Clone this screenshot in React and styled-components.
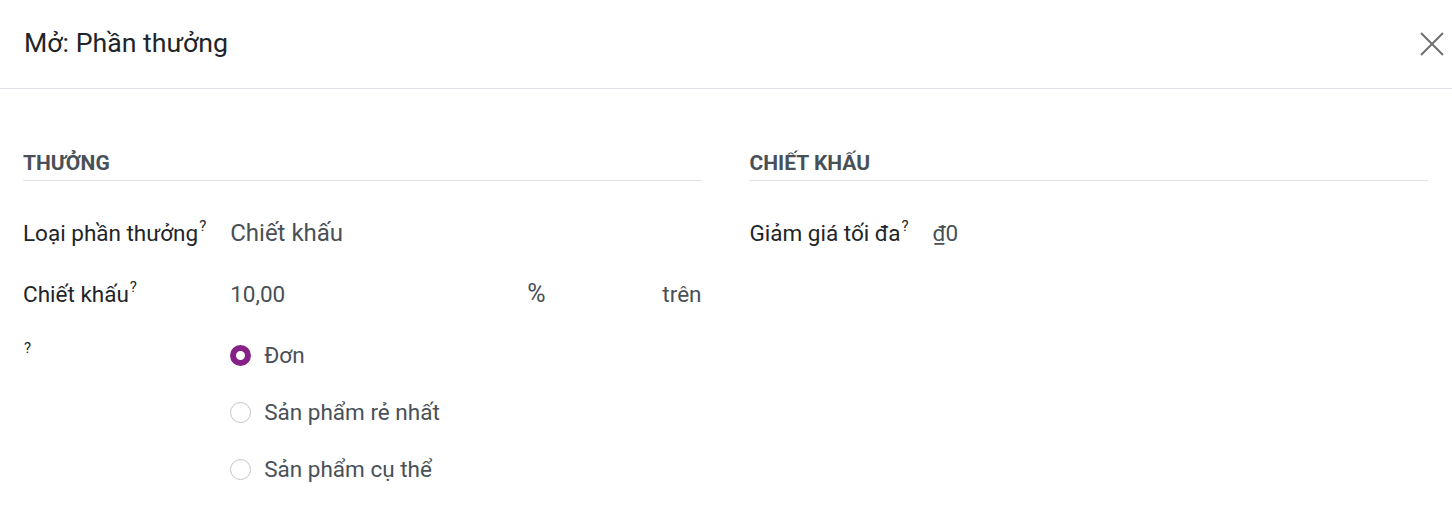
import React from "react";
import styled, { createGlobalStyle } from "styled-components";

const Global = createGlobalStyle`
  html, body { margin: 0; padding: 0; background: #fff; }
  body { font-family: Roboto, "Noto Sans", sans-serif; color: #212529; }
  * { box-sizing: border-box; }
`;

const Dialog = styled.div`
  width: 1452px;
  height: 528px;
  background: #fff;
  overflow: hidden;
`;

const Header = styled.header`
  height: 89px;
  display: flex;
  align-items: center;
  justify-content: space-between;
  padding: 0 0 0 24px;
  border-bottom: 1px solid #dee2e6;
`;

const Title = styled.h4`
  margin: 0;
  font-size: 26.7px;
  font-weight: 400;
  color: #212529;
  line-height: 32px;
  padding-bottom: 2px;
`;

const Close = styled.button`
  width: 40px;
  height: 40px;
  border: 0;
  background: none;
  padding: 0;
  display: flex;
  align-items: center;
  justify-content: center;
  cursor: pointer;
`;

const Body = styled.div`
  padding: 61px 24px 0 23px;
  display: grid;
  grid-template-columns: 1fr 1fr;
  column-gap: 48px;
`;

const Group = styled.section`
  display: flex;
  flex-direction: column;
`;

const SectionTitle = styled.div`
  font-size: 21px;
  font-weight: 700;
  text-transform: uppercase;
  color: #495057;
  line-height: 26px;
  padding-bottom: 4px;
  border-bottom: 1px solid #dee2e6;
`;

const Table = styled.div`
  display: grid;
  grid-template-columns: max-content 1fr;
  column-gap: 24px;
  margin-top: 37px;
  align-items: start;
`;

const Label = styled.div`
  font-size: 22.5px;
  color: #212529;
  line-height: 30px;
  min-height: ${p => p.$h ?? 61}px;
  white-space: nowrap;
`;

const Help = styled.sup`
  font-size: 15px;
  line-height: 0;
  vertical-align: baseline;
  margin-left: 1px;
  position: relative;
  top: -10px;
  color: #212529;
`;

const Value = styled.div`
  font-size: ${p => p.$size || 22.5}px;
  color: #495057;
  line-height: 30px;
  min-height: 61px;
`;

const Amount = styled.div`
  display: flex;
  align-items: baseline;
  font-size: 22.5px;
  color: #495057;
  line-height: 30px;
  min-height: 61px;
`;

const AmountInput = styled.span`
  flex: 0 0 297px;
`;

const Unit = styled.span`
  flex: 1;
  font-size: 25px;
`;

const Suffix = styled.span`
  color: #495057;
`;

const Radios = styled.div`
  display: flex;
  flex-direction: column;
  gap: 27px;
`;

const RadioRow = styled.label`
  display: flex;
  align-items: center;
  gap: 13px;
  font-size: 22.5px;
  color: #495057;
  line-height: 30px;
`;

const RadioDot = styled.span`
  width: 21px;
  height: 21px;
  border-radius: 50%;
  flex: 0 0 21px;
  background: #fff;
  border: ${p => (p.$on ? "6.5px solid #862187" : "1px solid #c4c4c4")};
`;

const Currency = styled.span`
  color: #495057;
`;

const Radio = ({ on, children }) => (
  <RadioRow>
    <RadioDot $on={on} />
    {children}
  </RadioRow>
);

export default function App() {
  return (
    <>
      <Global />
      <Dialog>
        <Header>
          <Title>Mở: Phần thưởng</Title>
          <Close aria-label="Đóng">
            <svg width="24" height="24" viewBox="0 0 24 24">
              <path d="M1 1L23 23M23 1L1 23" stroke="#6f6f6f" strokeWidth="2" fill="none" />
            </svg>
          </Close>
        </Header>
        <Body>
          <Group>
            <SectionTitle>Thưởng</SectionTitle>
            <Table>
              <Label>Loại phần thưởng<Help>?</Help></Label>
              <Value $size={24}>Chiết khấu</Value>
              <Label>Chiết khấu<Help>?</Help></Label>
              <Amount>
                <AmountInput>10,00</AmountInput>
                <Unit>%</Unit>
                <Suffix>trên</Suffix>
              </Amount>
              <Label $h={0}><Help>?</Help></Label>
              <Radios>
                <Radio on>Đơn</Radio>
                <Radio>Sản phẩm rẻ nhất</Radio>
                <Radio>Sản phẩm cụ thể</Radio>
              </Radios>
            </Table>
          </Group>
          <Group>
            <SectionTitle>Chiết khấu</SectionTitle>
            <Table>
              <Label>Giảm giá tối đa<Help>?</Help></Label>
              <Value><Currency>₫0</Currency></Value>
            </Table>
          </Group>
        </Body>
      </Dialog>
    </>
  );
}
